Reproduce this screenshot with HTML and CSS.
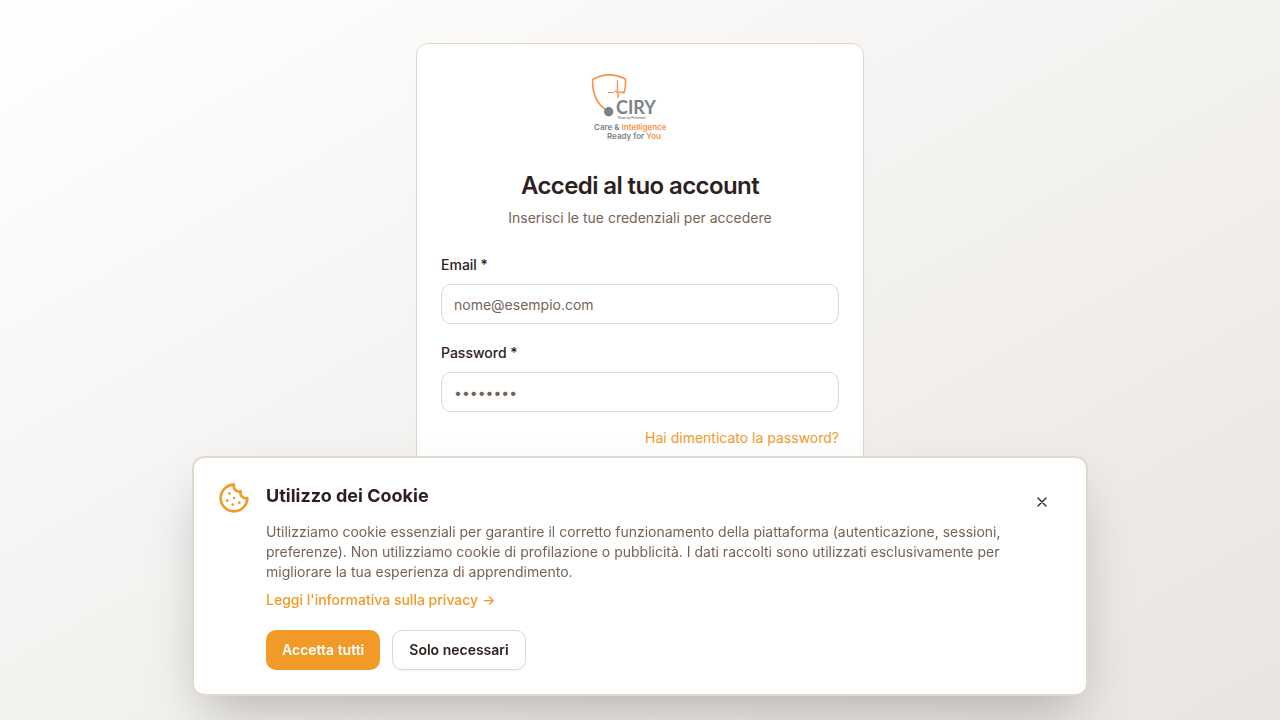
FILE: index.html
```html
<!DOCTYPE html>
<html lang="it">
<head>
<meta charset="utf-8">
<meta name="viewport" content="width=device-width, initial-scale=1">
<title>Accedi</title>
<link rel="stylesheet" href="styles.css">
</head>
<body>
<main class="page">
  <section class="card">
    <svg class="logo" viewBox="0 0 100 84" role="img" aria-label="CIRY">
      <path class="logo-line" d="M18 47C7 41 2 29 2.700 15.500Q18 6.500 35.500 15Q36 22 34.300 28.300L31.500 28"/>
      <path class="logo-pulse" d="M18 28.500h6l1.500-2 1.500 2.500.500-13 .500 18 1.500-7 1.500 2h3.500"/>
      <circle class="logo-gray" cx="18.700" cy="47.700" r="4.700"/>
      <text class="logo-gray logo-name" x="26" y="50">CIRY</text>
      <text class="logo-gray logo-by" x="28" y="55">Power by Preformed</text>
      <text class="logo-gray logo-tag" x="4" y="66">Care &amp; <tspan class="logo-orange">Intelligence</tspan></text>
      <text class="logo-gray logo-tag" x="17" y="75">Ready for <tspan class="logo-orange">You</tspan></text>
    </svg>
    <h1 class="title">Accedi al tuo account</h1>
    <p class="subtitle">Inserisci le tue credenziali per accedere</p>
    <form class="form">
      <div class="field">
        <label class="label" for="email">Email *</label>
        <input class="input" id="email" type="email" placeholder="nome@esempio.com">
      </div>
      <div class="field">
        <label class="label" for="password">Password *</label>
        <input class="input" id="password" type="password" placeholder="••••••••">
      </div>
      <a class="forgot" href="#">Hai dimenticato la password?</a>
    </form>
  </section>
</main>
<aside class="banner" aria-labelledby="cookie-title">
  <svg class="cookie" viewBox="0 0 24 24" aria-hidden="true">
    <path d="M12 2a10 10 0 1 0 10 10 4 4 0 0 1-5-5 4 4 0 0 1-5-5M8.500 8.500v.01M16 15.500v.01M12 12v.01M11 17v.01M7 14v.01"/>
  </svg>
  <div class="content">
    <h2 class="banner-title" id="cookie-title">Utilizzo dei Cookie</h2>
    <p class="banner-text">Utilizziamo cookie essenziali per garantire il corretto funzionamento della piattaforma (autenticazione, sessioni, preferenze). Non utilizziamo cookie di profilazione o pubblicità. I dati raccolti sono utilizzati esclusivamente per migliorare la tua esperienza di apprendimento.</p>
    <a class="privacy" href="#">Leggi l'informativa sulla privacy →</a>
    <div class="actions">
      <button class="button button-primary" type="button">Accetta tutti</button>
      <button class="button button-outline" type="button">Solo necessari</button>
    </div>
  </div>
  <button class="close" type="button" aria-label="Chiudi">
    <svg class="close-icon" viewBox="0 0 24 24" aria-hidden="true"><path d="M18 6 6 18M6 6l12 12"/></svg>
  </button>
</aside>
</body>
</html>
```
FILE: styles.css
```css
* { box-sizing: border-box; }
body {
  margin: 0;
  font-family: Inter, "Liberation Sans", sans-serif;
  font-size: 14px;
  line-height: 20px;
  color: #2e211d;
}
h1, h2, p { margin: 0; }
a { text-decoration: none; color: #f29a28; }
input, button { font: inherit; color: inherit; }

.page {
  min-height: 100vh;
  display: flex;
  justify-content: center;
  padding: 43px 16px;
  background: linear-gradient(to bottom right, #ffffff, #e9e5e0);
}
.card {
  width: 100%;
  max-width: 448px;
  padding: 20px 24px 24px;
  display: flex;
  flex-direction: column;
  background: #ffffff;
  border: 1px solid #e2d9cc;
  border-radius: 12px;
  box-shadow: 0 1px 2px rgba(0, 0, 0, 0.05);
}
.logo { width: 100px; align-self: center; margin-bottom: 22px; }
.logo-line, .logo-pulse { fill: none; stroke: #fa9148; stroke-width: 1.600; stroke-linejoin: round; }
.logo-pulse { stroke-width: 1; }
.logo-gray { fill: #7e8285; }
.logo-orange { fill: #fa9148; }
.logo-name { font: 700 18px Lato, sans-serif; }
.logo-by { font: 700 3px Lato, sans-serif; }
.logo-tag { font: 600 8px Inter, sans-serif; }

.title {
  font-size: 24px;
  line-height: 32px;
  font-weight: 600;
  letter-spacing: -0.025em;
  text-align: center;
}
.subtitle { margin-top: 6px; text-align: center; color: #786357; }
.form { margin-top: 24px; display: flex; flex-direction: column; gap: 16px; }
.field { padding-top: 2px; display: flex; flex-direction: column; gap: 8px; }
.label { font-weight: 500; line-height: 22px; }
.input {
  width: 100%;
  height: 40px;
  padding: 8px 12px;
  border: 1px solid #e2d9cc;
  border-radius: 10px;
  background: #ffffff;
}
.input::placeholder { color: #786357; opacity: 1; }
.forgot { align-self: flex-end; }

.banner {
  position: fixed;
  right: 16px;
  bottom: 24px;
  left: 16px;
  max-width: 896px;
  margin: 0 auto;
  padding: 24px;
  display: flex;
  align-items: flex-start;
  gap: 16px;
  background: #ffffff;
  border: 2px solid #e2d9cc;
  border-radius: 12px;
  box-shadow: 0 25px 50px -12px rgba(0, 0, 0, 0.25);
}
.cookie {
  flex: none;
  width: 32px;
  height: 32px;
  fill: none;
  stroke: #f29a28;
  stroke-width: 2;
  stroke-linecap: round;
  stroke-linejoin: round;
}
.content { flex: 1; }
.banner-title { font-size: 18px; line-height: 28px; font-weight: 700; }
.banner-text { margin: 12px 0 8px; color: #786357; }
.privacy { display: block; font-weight: 500; }
.actions { margin-top: 20px; display: flex; flex-wrap: wrap; gap: 12px; }
.button {
  height: 40px;
  padding: 0 16px;
  border: 0;
  border-radius: 10px;
  font-weight: 600;
}
.button-primary { background: #f29a28; color: #ffffff; }
.button-outline {
  background: #ffffff;
  border: 1px solid #e2d9cc;
  box-shadow: 0 1px 2px rgba(0, 0, 0, 0.05);
}
.close {
  flex: none;
  width: 40px;
  height: 40px;
  padding: 0;
  display: grid;
  place-items: center;
  border: 0;
  background: transparent;
}
.close-icon { width: 16px; height: 16px; fill: none; stroke: currentColor; stroke-width: 2; stroke-linecap: round; }
```
